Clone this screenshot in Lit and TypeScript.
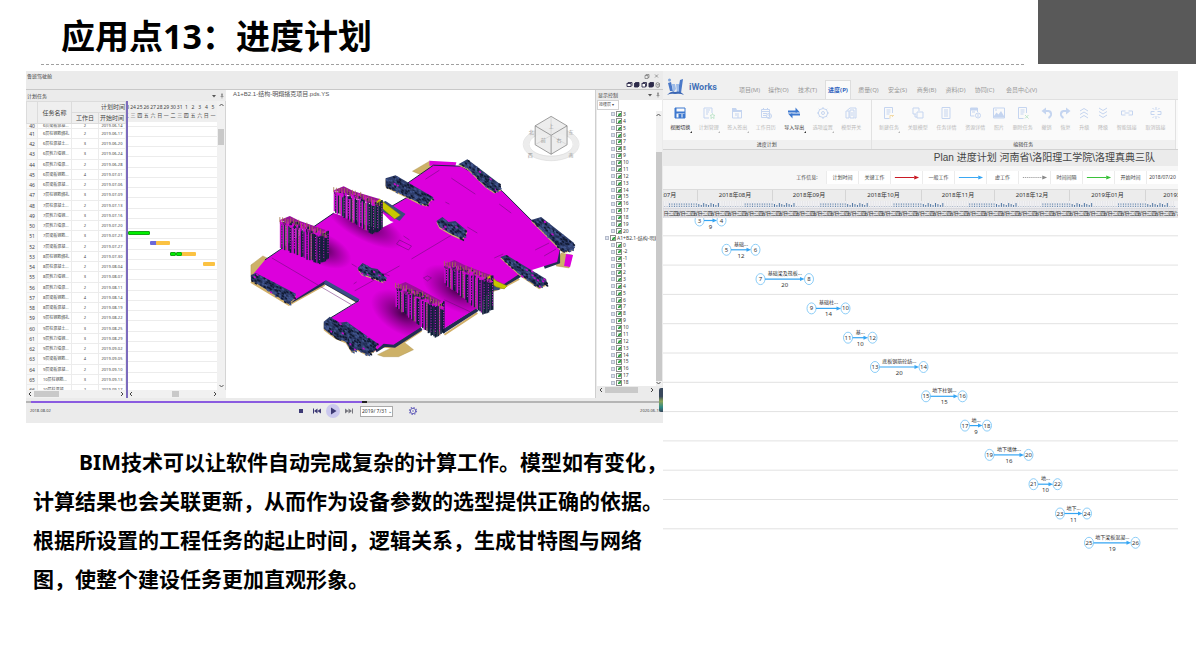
import { LitElement, html, css, svg, nothing } from "lit";
import { customElement } from "lit/decorators.js";
import { classMap } from "lit/directives/class-map.js";

const FONT = css`"Noto Sans", "Noto Sans CJK SC", sans-serif`;

/* ---------- schedule data ---------- */

type Task = [number, string, string, string];
const TASKS: Task[] = [
  [40, "6层梁板混凝...", "2", "2019-06-14"],
  [41, "6层柱钢筋绑扎", "2", "2019-06-17"],
  [42, "6层柱混凝土...", "3", "2019-06-20"],
  [43, "6层剪力墙钢...", "3", "2019-06-24"],
  [44, "6层剪力墙混...", "2", "2019-06-28"],
  [45, "6层梁板钢筋...", "4", "2019-07-01"],
  [46, "6层梁板混凝...", "2", "2019-07-06"],
  [47, "7层柱钢筋绑扎", "3", "2019-07-09"],
  [48, "7层柱混凝土...", "2", "2019-07-13"],
  [49, "7层剪力墙钢...", "3", "2019-07-16"],
  [50, "7层剪力墙混...", "2", "2019-07-20"],
  [51, "7层梁板钢筋...", "3", "2019-07-23"],
  [52, "7层梁板混凝...", "2", "2019-07-27"],
  [53, "8层柱钢筋绑扎", "4", "2019-07-30"],
  [54, "8层柱混凝土...", "2", "2019-08-04"],
  [55, "8层剪力墙钢...", "3", "2019-08-07"],
  [56, "8层剪力墙混...", "2", "2019-08-11"],
  [57, "8层梁板钢筋...", "4", "2019-08-14"],
  [58, "8层梁板混凝...", "2", "2019-08-19"],
  [59, "9层柱钢筋绑扎", "2", "2019-08-22"],
  [60, "9层柱混凝土...", "3", "2019-08-25"],
  [61, "9层剪力墙钢...", "3", "2019-08-29"],
  [62, "9层剪力墙混...", "2", "2019-09-02"],
  [63, "9层梁板钢筋...", "4", "2019-09-05"],
  [64, "9层梁板混凝...", "2", "2019-09-10"],
  [65, "10层柱钢筋...", "3", "2019-09-13"],
  [66, "10层柱混凝", "2", "2019-09-17"],
];
const DAYS: [string, string][] = [
  ["23", "二"], ["24", "三"], ["25", "四"], ["26", "五"], ["27", "六"], ["28", "日"], ["29", "一"],
  ["30", "二"], ["31", "三"], ["1", "四"], ["2", "五"], ["3", "六"], ["4", "日"], ["5", "一"], ["6", "二"],
];
/* bars: task number -> segments of [kind, left %, width %] */
const BARS: Record<number, [string, number, number][]> = {
  51: [["green", 0, 25]],
  52: [["violet", 25, 8], ["amber", 32, 15]],
  53: [["amber", 60, 16], ["green", 47, 7], ["green", 54, 7]],
  54: [["amber", 84, 14]],
};

/* ---------- building model ---------- */

function random(seed: number) {
  let s = seed;
  return () => {
    s = (s * 16807) % 2147483647;
    return s / 2147483647;
  };
}

type P = [number, number];
const pts = (list: P[]) => list.map((p) => p.join(",")).join(" ");

function inside(x: number, y: number, poly: P[]) {
  let hit = false;
  for (let i = 0, j = poly.length - 1; i < poly.length; j = i++) {
    const [xi, yi] = poly[i];
    const [xj, yj] = poly[j];
    if (yi > y !== yj > y && x < ((xj - xi) * (y - yi)) / (yj - yi) + xi) hit = !hit;
  }
  return hit;
}

const CLUSTERS: P[][] = [
  [[386, 178], [396, 175], [434, 197], [427, 205], [420, 203], [386, 186]],
  [[437, 221], [443, 217], [449, 222], [456, 221], [468, 231], [463, 239], [452, 234], [440, 227]],
  [[459, 164], [468, 159], [501, 184], [502, 189], [495, 192], [486, 186], [468, 168]],
  [[532, 220], [542, 217], [575, 243], [575, 249], [564, 252], [556, 244], [545, 233]],
  [[358, 268], [363, 263], [372, 268], [378, 269], [387, 278], [384, 282], [371, 277], [362, 274]],
  [[251, 275], [256, 273], [296, 294], [294, 299], [289, 304], [251, 280]],
  [[324, 322], [330, 317], [340, 323], [347, 322], [377, 343], [376, 350], [368, 355], [358, 350], [352, 352], [346, 342], [336, 338], [329, 333], [324, 329]],
  [[501, 257], [507, 255], [547, 279], [548, 284], [540, 288], [521, 275]],
];

function cluster(poly: P[], seed: number) {
  const rnd = random(seed);
  const xs = poly.map((p) => p[0]);
  const ys = poly.map((p) => p[1]);
  const x0 = Math.min(...xs), x1 = Math.max(...xs), y0 = Math.min(...ys), y1 = Math.max(...ys);
  const dots = [];
  for (let x = x0; x < x1; x += 2.5) {
    for (let y = y0; y < y1; y += 2.5) {
      const px = x + rnd() * 2, py = y + rnd() * 2;
      if (!inside(px, py, poly)) continue;
      const c = rnd();
      const fill = c < 0.45 ? "#111a33" : c < 0.82 ? "#41558c" : c < 0.95 ? "#222e54" : "#c808cc";
      dots.push(svg`<path fill=${fill} d="M${px} ${py}l2.200 1v1.800l-2.200 -1z"/>`);
    }
  }
  return svg`
    <polygon points=${pts(poly)} fill="#d2b06a" transform="translate(0 1.4)"/>
    <polygon points=${pts(poly)} fill="#2e3d6a"/>${dots}`;
}

/* x, top and bottom of the left edge, then top and bottom of the near corner */
const TOWERS = [
  [334, 190, 212, 204, 234],
  [280, 220, 248, 235, 264],
  [445, 264, 284, 280, 315],
  [396, 286, 307, 306, 338],
];

function tower([x, t0, b0, t1, b1]: number[], seed: number) {
  const rnd = random(seed);
  const front = 39, side = 48;
  const strips = [];
  const colors = ["#d306d3", "#16213a", "#d306d3", "#16213a", "#8e5a6a", "#d306d3", "#0d2236", "#0d2236", "#7a1590"];
  let k = 0;
  for (let d = 0; d < side; d += 1.4) {
    const f = Math.min(d, front) / front;
    const back = d > front ? (d - front) * 0.6 : 0;
    const top = t0 + (t1 - t0) * f - back + rnd() * 2;
    const bottom = b0 + (b1 - b0) * f - back + rnd() * 2 - 1;
    const dark = d > 32 && rnd() > 0.3;
    strips.push(svg`<rect x=${x + d} y=${top} width="1.6" height=${bottom - top} fill=${dark ? "#12203a" : colors[k % colors.length]}/>`);
    if (k % 3 === 1)
      strips.push(svg`<path d="M${x + d + 0.7} ${top + 3}V${bottom - 4}" stroke="#e21be2" stroke-width="1" stroke-dasharray="1 1.6"/>`);
    k++;
  }
  const roof = [];
  for (let i = 0; i < 90; i++) {
    const f = rnd();
    const px = x + f * 46;
    const py = t0 + (t1 - t0) * f - 6 * rnd() * Math.sin(f * 3.1) + 2 - f;
    const c = rnd();
    roof.push(svg`<rect x=${px} y=${py} width=${1 + rnd() * 1.8} height=${1 + rnd() * 2.2} fill=${c < 0.5 ? "#d306d3" : c < 0.8 ? "#17243f" : "#7c1a80"}/>`);
  }
  for (let i = 0; i < 18; i++) {
    const f = i / 17;
    const px = x + f * 46;
    const py = t0 + (t1 - t0) * f - 4 * Math.abs(Math.sin(f * 3.1)) * rnd();
    roof.push(svg`<path d="M${px} ${py - 3}v5" stroke="#a5774a" stroke-width=".8"/>`);
  }
  return svg`
    <polygon points=${pts([[x, t0], [x + 10, t0 - 4], [x + 20, t0 + 1], [x + 46, t1 - 5], [x + 40, t1]])} fill="#9a1298"/>
    ${strips}${roof}`;
}

const PLATE =
  "M434 165L462 166L503 191L532 220L574 246L561 248L558 262L520 274L505 284L492 289L478 308L441 331L422 327L394 345L384 344L375 352L331 318L360 301L325 281L295 300L289 302L251 277L265 260L280 250L334 213L378 229L392 222L382 212L408 197L408 183Z";

const model = svg`
  <defs>
    <radialGradient id="shade"><stop offset="0" stop-color="#2a0030" stop-opacity=".85"/><stop offset=".45" stop-color="#3c0040" stop-opacity=".45"/><stop offset="1" stop-color="#500050" stop-opacity="0"/></radialGradient>
    <clipPath id="plate"><path d=${PLATE}/></clipPath>
  </defs>
  <g fill="#cdb168" stroke="#a98f4a" stroke-width=".4">
    <path d="M413 171L430 161L440 164L420 174Z"/>
    <path d="M251 265L263 256L271 260L264 270L251 277Z"/>
    <path d="M562 253L567 254L573 255L570 268L557 266Z"/>
    <path d="M378 355L404 342L414 350L399 357L384 357Z"/>
  </g>
  <path fill="#dc00dc" d="M430 160.500L457 162L456 166L430 165.500ZM567 254L574 255L571 267L565 266Z"/>
  <g fill="none" stroke="#d2b06a" stroke-width="2">
    <path d="M251 282L289 305L325 285M445 335L478 313M384 347L396 348L422 331M491 292L505 287L520 279M325 283L357 302"/>
  </g>
  <g fill="none" stroke="#222e52" stroke-width="4">
    <path d="M289 302.500L325 282L359 301.500M443 332L478 309.500M376 351L385 345L395 346L422 328.500M490 290L505 284.500L521 275M559 248V262L545 267"/>
  </g>
  <path fill="#dc00dc" d=${PLATE}/>
  <path fill="none" stroke="#3a4d86" stroke-width="3.500" d="M325 281.500L359 301"/>
  <g fill="none" stroke="#1a2344" stroke-width="1">
    <path d="M434 165L462 166L503 191L532 220L574 246M408 183L434 165M331 318L359 301M265 260L334 213M382 212L408 197"/>
  </g>
  <g clip-path="url(#plate)">
    <ellipse cx="322" cy="249" rx="32" ry="16" fill="url(#shade)" transform="rotate(25 322 249)"/>
    <ellipse cx="365" cy="224" rx="44" ry="16" fill="url(#shade)" transform="rotate(28 365 224)"/>
    <ellipse cx="404" cy="314" rx="36" ry="20" fill="url(#shade)" transform="rotate(30 404 314)"/>
    <ellipse cx="457" cy="290" rx="38" ry="20" fill="url(#shade)" transform="rotate(30 457 290)"/>
  </g>
  <g fill="none" stroke="#60106e" stroke-width=".5">
    <path d="M355 291L400 266M412 259L464 228M272 258L352 305M400 240L412 246L409 250L397 244ZM404 236l6 4M445 300l26 12M452 178L476 194M500 204l12 9M440 170l-14 9M536 250l14 -7M545 256l12 -7M495 258l9 -4M424 278l4 -2l4 2l-4 3zM446 202l4 2M468 227l10 6M382 273l8 3M352 264l5 3M354 284l3 -2"/>
  </g>
  <path fill="#3a4d7c" d="M381 203L386 201L406 214L400 221L384 212Z"/>
  <path fill="#c8c800" stroke="#77770a" stroke-width=".5" d="M373 200L380 199L401 215L395 219Z"/>
  <path fill="#fff" d="M381 218L394 222L380 229Z"/>
  ${CLUSTERS.map((c, i) => cluster(c, 97 + i * 31))}
  <path fill="#3a4d7c" d="M492 281L502 284L500 290L490 291Z"/>
  <path fill="#c8c800" stroke="#77770a" stroke-width=".5" d="M480 273L491 275L497 281L508 286L505 289L497 287L485 279Z"/>
  ${TOWERS.map((t, i) => tower(t, 411 + i * 57))}
  <g fill="none" stroke="#d9d9d9">
    <ellipse cx="552" cy="144" rx="25" ry="14" stroke="#ececec" stroke-width="5"/>
    <ellipse cx="552" cy="144" rx="28" ry="16.500" stroke-width=".6"/>
    <ellipse cx="552" cy="144" rx="22" ry="12" stroke-width=".6"/>
  </g>
  <path d="M552 116L568 125.500V144.500L552 154L536 144.500V125.500Z" fill="#ebebeb" fill-opacity=".9" stroke="#777" stroke-width=".7"/>
  <path d="M536 125.500L552 135L568 125.500M552 135V154" fill="none" stroke="#777" stroke-width=".7"/>
  <g fill="none" stroke="#bbb" stroke-width=".4"><path d="M552 116V135M536 144.500L552 135L568 144.500"/></g>
  <g class="cube">
    <text x="552" y="128">上</text><text x="544" y="142">前</text><text x="560" y="142">右</text>
    <text x="532" y="134">北</text><text x="572" y="134">东</text><text x="531" y="157">西</text><text x="572" y="157">南</text>
  </g>`;

@customElement("plan-gantt")
class PlanGantt extends LitElement {
  static styles = css`
    :host { display: grid; grid-template-columns: 100px 2px 1fr 8px; grid-template-rows: minmax(0, 1fr); overflow: hidden; background: #fff; color: #444; font: 5px/6px ${FONT}; border-right: 1px solid #d4d4d4; }
    .left, .right { overflow: hidden; }
    table { border-collapse: collapse; width: 100%; table-layout: fixed; }
    thead th { background: #efefef; font-weight: 400; font-size: 6px; border: 1px solid #dcdcdc; padding: 0; height: 10px; }
    th.index { width: 10px; }
    th.name { width: 33px; }
    th.days { width: 19px; }
    thead tr:first-child th.period { text-align: right; }
    tbody { font-size: 4px; }
    td { height: 9px; padding: 0; text-align: center; white-space: nowrap; overflow: hidden; border: 1px solid #ececec; border-top: 0; }
    tbody tr:nth-child(4n) td { height: 10px; }
    tbody tr:first-child td { height: 4px; line-height: 0; }
    td.no { font-size: 5px; background: #f8f8f8; }
    td.text { text-align: left; padding-left: 5px; }
    .rule { background: #7c6bbd; }
    .calendar { display: grid; grid-template-columns: repeat(15, 1fr); width: 100px; margin-left: -5px; height: 21px; padding-top: 2px; box-sizing: border-box; background: #efefef; font-size: 5px; line-height: 8px; text-align: center; }
    .calendar span { white-space: nowrap; }
    .lane { position: relative; height: 9px; border-bottom: 1px solid #ececec; }
    .lane:nth-child(4n + 1) { height: 10px; }
    .lane.first { height: 4px; }
    .bar { position: absolute; top: 2px; height: 4px; border-radius: 1px; box-sizing: border-box; }
    .green { background: #00f000; border: 1px solid #15a315; }
    .violet { background: #6c69d8; }
    .amber { background: #fbc242; }
    .scroll { background: #f1f1f1; display: grid; grid-template-rows: 8px 20px 16px 1fr 8px; justify-items: center; }
    .thumb { grid-row: 3; width: 6px; background: #c9c9c9; }
    .scroll svg { width: 5px; height: 4px; margin-top: 2px; }
    .scroll .down { grid-row: 5; }
  `;
  render() {
    return html`
      <div class="left">
        <table>
          <thead>
            <tr><th class="index" rowspan="2"></th><th class="name" rowspan="2">任务名称</th><th class="period" colspan="2">计划时间</th></tr>
            <tr><th class="days">工作日</th><th>开始时间</th></tr>
          </thead>
          <tbody>
            ${TASKS.map(([n, name, d, start]) => html`<tr><td class="no">${n}</td><td class="text">${name}</td><td>${d}</td><td>${start}</td></tr>`)}
          </tbody>
        </table>
      </div>
      <div class="rule"></div>
      <div class="right">
        <div class="calendar">${DAYS.map(([d, w]) => html`<span>${d}<br />${w}</span>`)}</div>
        <div>
          ${TASKS.map(([n], i) => html`<div class=${classMap({ lane: true, first: i === 0 })}>
            ${(BARS[n] ?? []).map(([kind, x, w]) => html`<div class="bar ${kind}" style="left:${x}%;width:${w}%"></div>`)}
          </div>`)}
        </div>
      </div>
      <div class="scroll">
        <svg viewBox="0 0 5 4"><path d="M.5 3L2.500 1L4.500 3" fill="none" stroke="#555"/></svg>
        <div class="thumb"></div>
        <svg class="down" viewBox="0 0 5 4"><path d="M.5 1L2.500 3L4.500 1" fill="none" stroke="#555"/></svg>
      </div>`;
  }
}

const range = (a: number, b: number) => Array.from({ length: b - a + 1 }, (_, i) => String(a + i));
const TREE = [...range(3, 20), "A1+B2.1-结构-明翔播", "0", "-2", "-1", ...range(1, 18)];

@customElement("level-tree")
class LevelTree extends LitElement {
  static styles = css`
    :host { display: grid; grid-template-columns: minmax(0, 1fr) 6px; grid-template-rows: minmax(0, 1fr); background: #fff; color: #444; font: 5px/5px ${FONT}; overflow: hidden; min-height: 0; }
    ul { margin: 0; padding: 0 0 0 14px; list-style: none; display: grid; grid-auto-rows: minmax(0, 1fr); min-width: 0; overflow: hidden; }
    li { display: flex; align-items: center; min-height: 0; white-space: nowrap; }
    li.root { margin-left: -6px; }
    label { display: flex; align-items: center; gap: 1px; }
    .plus { width: 4px; height: 4px; border: 1px solid #b6bccb; background: #dde2ee; margin-right: 1px; box-sizing: border-box; flex: none; }
    input { appearance: none; flex: none; margin: 0; width: 6px; height: 6px; box-sizing: border-box; border: 1px solid #8c8c8c; background: #fff linear-gradient(135deg, #c9e8cd 20%, #1f9a35 50%, #a8d8ae) center / 3px 3px no-repeat; }
    .scroll { background: #f1f1f1; display: grid; grid-template-rows: 41px 1fr 5px; }
    .thumb { grid-row: 2; background: #c9c9c9; }
    .scroll svg { width: 5px; height: 4px; margin-top: 2px; }
    .scroll .down { margin-top: 0; }
  `;
  render() {
    return html`<ul>
        ${TREE.map((t) => html`<li class=${t.startsWith("A1") ? "root" : ""}><span class="plus"></span><label><input type="checkbox" checked />${t}</label></li>`)}
      </ul>
      <div class="scroll">
        <svg viewBox="0 0 5 4"><path d="M.5 3L2.500 1L4.500 3" fill="none" stroke="#555"/></svg>
        <div class="thumb"></div>
        <svg class="down" viewBox="0 0 5 4"><path d="M.5 1L2.500 3L4.500 1" fill="none" stroke="#555"/></svg>
      </div>`;
  }
}

@customElement("model-viewer")
class ModelViewer extends LitElement {
  static styles = css`
    :host { display: block; background: #ebebeb; color: #444; font: 5px/6px ${FONT}; overflow: hidden; }
    header { display: grid; grid-template-columns: 1fr auto; height: 19px; box-sizing: border-box; padding: 2px 2px 0 1px; border-bottom: 1px solid #c8c8c8; }
    header svg { width: 36px; height: 17px; }
    .body { display: grid; grid-template-columns: 200px minmax(0, 1fr) 67px; grid-template-rows: minmax(0, 1fr); height: 308px; }
    .pane { display: grid; grid-template-rows: 11px minmax(0, 1fr) 8px; min-width: 0; }
    .caption { display: flex; align-items: center; justify-content: space-between; padding: 0 1px; }
    .caption svg { width: 16px; height: 6px; }
    .hscroll { display: grid; grid-template-columns: 100px 1fr; background: #f1f1f1; }
    .hscroll svg { width: 100%; height: 8px; }
    .scene { background: #fff; position: relative; overflow: hidden; border-right: 1px solid #cfcfcf; }
    .scene svg { display: block; width: 100%; height: 100%; }
    .file { position: absolute; left: 7px; top: 1px; color: #555; font: 6px/7px "Liberation Sans", "Noto Sans CJK SC", sans-serif; white-space: nowrap; }
    .cube { font: 5px "Noto Sans CJK SC", sans-serif; fill: #999; text-anchor: middle; }
    .levels { display: grid; grid-template-rows: 10px 11px minmax(0, 1fr) 8px 4px; padding: 0 1px; min-width: 0; }
    .filter { background: #fff; }
    select { appearance: none; display: block; width: 22px; height: 10px; padding: 0 0 0 1px; border: 1px solid #d2d2d2; border-radius: 0; background: #fff; color: #444; font: 4px/6px ${FONT}; }
    .levels > svg { width: 100%; height: 8px; }
    footer { position: relative; border-top: 0; height: 25px; }
    footer > svg { display: block; width: 100%; height: 6px; }
    .controls { display: grid; grid-template-columns: 1fr auto 1fr; align-items: center; height: 14px; padding: 0 0 0 4px; font-size: 4px; }
    .player { display: flex; align-items: center; gap: 4px; padding-left: 11px; }
    button { border: 0; padding: 0; background: none; width: 12px; height: 14px; display: grid; place-items: center; }
    button svg { width: 12px; height: 14px; }
    input { width: 33px; height: 11px; box-sizing: border-box; border: 1px solid #aaa; padding: 0 0 0 1px; margin-left: 1px; background: #fff; color: #333; font: 5px/8px ${FONT}; }
    .end { text-align: right; padding-right: 2px; }
    .strip { position: absolute; right: 0; top: -10px; width: 4px; height: 24px; border-radius: 2px 0 0 2px; background: linear-gradient(#39485c 35%, #8ba458 55%, #2f8a87 80%, #39485c); }
  `;
  render() {
    return html`
      <header>
        <span>鲁班驾驶舱</span>
        <svg viewBox="0 0 36 17">
          <path d="M20 2.500h3v3h-3zM21 2.500v-1h3v3h-1M30 1.500l3 3M33 1.500l-3 3" fill="none" stroke="#777" stroke-width=".7"/>
          <g fill="#fff" stroke="#2d2a4a" stroke-width=".9"><path d="M2 10.500h4v3h-4zM2 10.500l1 -1h4v3l-1 1"/><path fill="#2d2a4a" d="M9.500 10.500h3.500v3.500h-3.500zM9.500 10.500l1 -1h3.500v3.500l-1 1"/><path d="M17 10.500h3.500v3.500h-3.500zM17 10.500l1 -1h3.500v4"/><path fill="#2d2a4a" d="M24 10.500h3.500v3.500h-3.500zM24 10.500l1 -1h3.500v3.500l-1 1"/><path stroke="#888" d="M31 10.500l1.500 -1l2 1v3l-2 1l-1.500 -1zl2 1v3M33 11.500l1.500 -1"/></g>
        </svg>
      </header>
      <div class="body">
        <section class="pane">
          <div class="caption"><span>计划任务</span>${this.pin()}</div>
          <plan-gantt></plan-gantt>
          <div class="hscroll">
            <svg viewBox="0 0 100 8" preserveAspectRatio="none"><rect x="8" y="1" width="25" height="6" fill="#c9c9c9"/><path d="M5 2L3 4L5 6M95 2L97 4L95 6" fill="none" stroke="#444"/></svg>
            <svg viewBox="0 0 100 8" preserveAspectRatio="none"><rect x="46" y="1" width="7" height="6" fill="#c9c9c9"/><path d="M1 0V8" stroke="#7c6bbd" stroke-width="2"/><path d="M6 2L4 4L6 6M88 2L90 4L88 6" fill="none" stroke="#444"/></svg>
          </div>
        </section>
        <section class="scene">
          <svg viewBox="226 90 370 308" preserveAspectRatio="xMidYMid meet">${model}</svg>
          <span class="file">A1+B2.1-结构-明翔播克项目.pds.YS</span>
        </section>
        <section class="levels">
          <div class="caption"><span>显示控制</span>${this.pin()}</div>
          <div class="filter"><select aria-label="显示控制"><option>按楼层 ▾</option></select></div>
          <level-tree></level-tree>
          <svg viewBox="0 0 65 8" preserveAspectRatio="none"><rect x="8" y="1" width="33" height="6" fill="#c9c9c9"/><path d="M5 2L3 4L5 6M54 2L56 4L54 6" fill="none" stroke="#444"/></svg>
        </section>
      </div>
      <footer>
        <svg viewBox="0 0 637 6" preserveAspectRatio="none"><path d="M0 4H637" stroke="#b5b5b5" stroke-width="2"/><path d="M5 4H336" stroke="#8a5be0" stroke-width="2"/><path d="M336 4H341" stroke="#222" stroke-width="2"/></svg>
        <div class="controls">
          <span>2018-08-02</span>
          <div class="player">
            <button aria-label="停止"><svg viewBox="0 0 12 14"><path d="M4 5h4v4H4z" fill="#3d3a75"/></svg></button>
            <button aria-label="上一步"><svg viewBox="0 0 12 14"><path d="M2 4.500h1v5h-1zM3 7l3.500 -2.500v5zM6.500 7l3.500 -2.500v5z" fill="#3d3a75"/></svg></button>
            <button aria-label="播放"><svg viewBox="0 0 12 14" overflow="visible"><circle cx="6" cy="7" r="7" fill="#cbc8ee"/><path d="M4 3.500L9.500 7L4 10.500z" fill="#3d3a75"/></svg></button>
            <button aria-label="下一步"><svg viewBox="0 0 12 14"><path d="M9 4.500h1v5h-1zM9 7l-3.500 -2.500v5zM5.500 7l-3.500 -2.500v5z" fill="#77777f"/></svg></button>
            <input aria-label="日期" value="2019/ 7/31 ⌄" />
            <button aria-label="设置"><svg viewBox="0 0 12 14" overflow="visible"><circle cx="16" cy="7" r="2.700" fill="none" stroke="#6d68bd" stroke-width="1"/><circle cx="16" cy="7" r="3.500" fill="none" stroke="#6d68bd" stroke-width="1.200" stroke-dasharray="1.400 1.350"/><circle cx="16" cy="7" r=".8" fill="#6d68bd"/></svg></button>
          </div>
          <span class="end">2020-06-15</span>
        </div>
        <div class="strip"></div>
      </footer>`;
  }
  private pin() {
    return html`<svg viewBox="0 0 16 6"><path d="M3 2h4l-2 2.500z" fill="#555"/><path d="M12 1h2M12.500 1v2.500M13.500 1v2.500M11.500 3.500h3M13 3.500v2" fill="none" stroke="#777" stroke-width=".6"/></svg>`;
  }
}

/* ---------- network plan ---------- */

const MENUS = ["项目(M)", "操作(O)", "技术(T)", "进度(P)", "质量(Q)", "安全(S)", "商务(B)", "资料(D)", "协同(C)", "会员中心(V)"];

const doc = svg`<path d="M2 .5h8v11h-8zM4 3h4M4 5h4M4 7h4M4 9h4"/>`;
const ICONS: Record<string, unknown> = {
  view: svg`<path d="M1 1h10v10h-10z"/><path class="solid" d="M1 1h1.500v10h-1.500zM2 4.500h9v2h-9zM4.500 7h3v4h-3zM8.500 7h2.500v4h-2.500z"/>`,
  manage: svg`<path d="M9 6V1h-8v10h5M3 3h4M3 5h3M3 7h2"/><path class="green" d="M9.500 6.500l.8 1.700l1.700 .2l-1.300 1.200l.4 1.900l-1.600 -1l-1.600 1l.4 -1.900l-1.300 -1.200l1.700 -.2z"/>`,
  check: svg`<path class="solid" d="M1 1h4l1 2h5v2h-10z"/><path d="M1.500 4v7h9v-7M5 6v3M7 6v5"/>`,
  calendar: svg`<path d="M1.500 2.500h8v8h-8zM3.500 1v2M7.500 1v2M1.500 4.500h8M3 6.500h4M3 8.500h3"/><circle cx="9" cy="9" r="2.500"/><path d="M9 7.500v1.500h1.500"/>`,
  swap: svg`<path class="bold" d="M0 4.500h9M12 7.500h-9"/><path class="solid" d="M7.500 .5l4.500 5h-4.500zM4.500 11.500l-4.500 -5h4.500z"/>`,
  gear: svg`<path d="M6 1.500l3.500 1.200l1.200 3.300l-1.200 3.300l-3.500 1.200l-3.500 -1.200l-1.200 -3.300l1.200 -3.300z"/><path d="M6 0v2M6 10v2M0 6h2M10 6h2M1.800 1.800l1 1M9.200 9.200l1 1M10.200 1.800l-1 1M2.800 9.200l-1 1"/><circle cx="6" cy="6" r="1.500"/>`,
  building: svg`<path d="M1 4h3v7h-3zM5 3h4v8h-4zM2 3.500l3 -2.500h6v2M11 3v8h-1.500M7 5v4"/>`,
  newdoc: svg`<path d="M9.500 6V.5h-8v11h5M3.500 3h4M3.500 5h4M3.500 7h3"/><path class="amber" d="M7 11.500v-3h4M9 10l2 -2"/>`,
  link: svg`<path d="M4 7h-3v-6h6v3M5 5h6v6h-6zM3 7v3h2"/>`,
  doc,
  resource: svg`<path class="solid" d="M1 1h8v2.500h-8z"/><path d="M8.500 5V1h-7v8h4M3 5h3"/><circle cx="9" cy="8.500" r="2.500"/><path d="M9 7v3"/>`,
  photo: svg`<path d="M.5 1h11v10h-11z"/><path class="solid" d="M1 9l2.500 -3.500l2 2l2.500 -3.500l3 5v1.500h-10zM3 2l1 1l-1 1l-1 -1z"/>`,
  remove: svg`<path d="M9.500 6V.5h-8v11h5M3.500 3h4M3.500 5h4M3.500 7h3"/><path class="green" d="M8 8l3.500 3.500M11.500 8l-3.500 3.500"/>`,
  undo: svg`<path class="bold" d="M4 4h3.500q3 .5 2.500 4q-.5 2 -2.500 3"/><path class="solid" d="M5 .5v7l-4.500 -3.500z"/>`,
  redo: svg`<path class="bold" d="M8 4h-3.500q-3 .5 -2.500 4q.5 2 2.500 3"/><path class="solid" d="M7 .5v7l4.500 -3.500z"/>`,
  up: svg`<path d="M2 4l4 -2.500l4 2.500M2 7.500l4 -2.500l4 2.500M2 11l4 -2.500l4 2.500"/>`,
  down: svg`<path d="M2 1l4 2.500l4 -2.500M2 4.500l4 2.500l4 -2.500M2 8l4 2.500l4 -2.500"/>`,
  chain: svg`<path d="M4.500 4h-4v4h4M7.500 4h4v4h-4M3.500 6h5"/>`,
  unlink: svg`<path d="M4.500 4.500h-3.500v3h3.500M7.500 4.500h3.500v3h-3.500M6 0v3M6 9v3M2.500 1l1.500 1.500M9.500 1l-1.500 1.500M2.500 11l1.500 -1.500M9.500 11l-1.500 -1.500"/>`,
};

type Tool = [string, string, boolean?, boolean?];
const PLAN_TOOLS: Tool[] = [
  ["view", "视图切换", true, true], ["manage", "计划管理", false, true], ["check", "签入签出", false, true],
  ["calendar", "工作日历"], ["swap", "导入导出", true, true], ["gear", "选项设置", false, true], ["building", "模型开关"],
];
const TASK_TOOLS: Tool[] = [
  ["newdoc", "新建任务", false, true], ["link", "关联模型"], ["doc", "任务详情"], ["resource", "资源详情"], ["photo", "照片"],
  ["remove", "删除任务"], ["undo", "撤销"], ["redo", "恢复"], ["up", "升级"], ["down", "降级"], ["chain", "智能链接"], ["unlink", "取消链接"],
];
const MONTHS = ["2018年07月", "2018年08月", "2018年09月", "2018年10月", "2018年11月", "2018年12月", "2019年01月", "2019年02月"];
const MONTH_DAYS = [31, 31, 30, 31, 30, 31, 31, 28];
const LINKS: [number, number, number, string, string][] = [
  [3, 699.5, 721.5, "", "9"], [5, 726.5, 755.5, "基础...", "12"], [7, 760.5, 809, "基础梁及筏板...", "20"],
  [9, 811.5, 845.5, "基础柱...", "14"], [11, 848, 872.5, "基...", "10"], [13, 875, 923.5, "底板钢筋砼结...", "20"],
  [15, 926, 962.5, "地下柱钢...", "15"], [17, 965, 987, "地...", "9"], [19, 989.5, 1028.5, "地下墙体...", "16"],
  [21, 1033.5, 1057.5, "地...", "10"], [23, 1060, 1087, "地下...", "11"], [25, 1089, 1135.5, "地下梁板混凝...", "19"],
];

@customElement("network-plan")
class NetworkPlan extends LitElement {
  static styles = css`
    :host { display: block; background: #fff; color: #444; font: 6px/8px ${FONT}; overflow: hidden; }
    .top { display: flex; align-items: flex-end; height: 29px; box-sizing: border-box; background: #f0f0f0; border-bottom: 1px solid #e0e0e0; }
    .brand { display: flex; align-items: center; gap: 5px; width: 68px; padding: 0 0 3px 4px; color: #4472b8; font: bold 9px/14px Roboto, ${FONT}; }
    .brand svg { width: 17px; height: 18px; }
    nav { display: flex; flex: 1; height: 19px; }
    nav a { display: grid; place-items: center; flex: 0 0 29px; color: #999; text-decoration: none; white-space: nowrap; border: 1px solid transparent; border-bottom: 0; box-sizing: border-box; }
    nav a:last-child { flex-basis: 45px; }
    nav a.active { flex-basis: 26px; margin: 0 3px; background: #fafafa; border-color: #ddd; color: #2f62bd; font-weight: 700; }
    .ribbon { display: grid; grid-template-columns: 209fr 305fr 2fr; background: #fafafa; border-bottom: 1px solid #d2d2d2; }
    .group { display: grid; grid-template-rows: 40px 9px; border-right: 1px solid #e2e2e2; }
    .tools { display: flex; padding: 7px 5px 0 3px; }
    .caption { background: #f0f0f0; text-align: center; font-size: 5px; }
    .tools button { position: relative; flex: 19 1 19px; display: flex; flex-direction: column; align-items: center; gap: 5px; padding: 0; border: 0; background: none; color: #b9b9b9; font: 5px/7px ${FONT}; white-space: nowrap; }
    .tools button.wide { flex: 29 1 29px; }
    .tools button.on { color: #333; }
    .tools svg { width: 12px; height: 12px; fill: none; stroke: #c5d5f0; stroke-width: 1; color: #c5d5f0; }
    .tools .on svg { stroke: #3d78cf; color: #3d78cf; }
    .solid { fill: currentColor; stroke: none; }
    .bold { stroke-width: 2; }
    .green { stroke: #bfe5cb; }
    .amber { stroke: #f3dba8; }
    .corner { position: absolute; right: 3px; top: 24px; width: 0; height: 0; border-left: 2px solid transparent; border-bottom: 2px solid currentColor; }
    h2 { margin: 0; height: 16px; padding-right: 23px; background: #ebebeb; color: #444; font: 400 10px/15px "Liberation Sans", "Noto Sans CJK SC", sans-serif; text-align: right; white-space: nowrap; }
    .legend { display: flex; justify-content: flex-end; align-items: center; height: 23px; background: #f7f7f7; font-size: 5px; }
    .legend > * { flex: 0 0 32px; height: 13px; box-sizing: border-box; border-left: 1px solid #ececec; background: #fff; text-align: center; line-height: 13px; white-space: nowrap; }
    .legend > .title { background: none; border: 0; margin-right: 3px; }
    .legend svg { fill: none; }
    .months { display: grid; grid-template-columns: 75px 75px 73px 76px 73px 75px 76px 68px; margin-left: -40px; background: #ececec; border-top: 1px solid #dcdcdc; text-align: center; line-height: 11px; color: #333; }
    .months span { border-right: 1px solid #d5d5d5; }
    .scale { display: block; width: 100%; height: 17px; background: #e6e6e9; }
    .week { font: 5px "Noto Sans CJK SC", sans-serif; fill: #444; }
    .network { display: block; width: 100%; height: auto; }
    .network text { font: 5px ${FONT}; fill: #333; text-anchor: middle; }
    .network .num { font-size: 6px; }
  `;
  private group(tools: Tool[], caption: string) {
    return html`<div class="group">
      <div class="tools">
        ${tools.map(([icon, label, on, more]) => html`<button class=${classMap({ on: !!on, wide: label.length > 2 })}>
          <svg viewBox="0 0 12 12">${ICONS[icon]}</svg>${label}${more ? html`<i class="corner"></i>` : nothing}
        </button>`)}
      </div>
      <div class="caption">${caption}</div>
    </div>`;
  }
  private arrow(color: string, dash = "0") {
    return html`<svg viewBox="0 0 32 13"><path d="M4 6.500H24" stroke=${color} stroke-width="1" stroke-dasharray=${dash}/><path d="M24 4.500L29 6.500L24 8.500z" fill=${color}/></svg>`;
  }
  private scale() {
    const week = "四五六日一二三";
    const days = MONTH_DAYS.flatMap((n) => Array.from({ length: n }, (_, i) => i + 1));
    const cells = days.map((day, i) => ({ day, x: 622 + i * 2.44, name: week[i % 7] })).filter((c) => c.x > 663 && c.x < 1174);
    return html`<svg class="scale" viewBox="663 201 515 17" preserveAspectRatio="none">
      <rect x="663" y="201" width="515" height="7" fill="#f1f1f3"/>
      ${cells.map(({ day, x }) => {
        const top = day < 10 ? 203 + (day % 3) : day < 20 ? 206 : 203.5;
        const color = day >= 10 && day < 20 ? "#a9b6c8" : "#4f76a3";
        return svg`<path d="M${x} 201v17" stroke="#d4d4dc" stroke-width=".4"/>
          <path d="M${x + 1.2} ${top}V207" stroke=${color} stroke-dasharray=${day >= 20 ? "1.2 1" : "0"} stroke-width="1"/>`;
      })}
      <path d="M663 208.500h515" stroke="#d0d0d6" stroke-width=".6"/>
      <text class="week" y="215" x=${cells.map((c) => c.x.toFixed(1)).join(" ")}>${cells.map((c) => c.name).join("")}</text>
    </svg>`;
  }
  private network() {
    return html`<svg class="network" viewBox="663 218 515 342">
      ${LINKS.map(([n, a, b, label, days], i) => {
        const y = 220.5 + i * 29.3;
        return svg`
          ${i ? svg`<path d="M663 ${y - 14}h515" stroke="#e2e2e2"/>` : nothing}
          <g fill="#fff" stroke="#6fc0f5" stroke-width=".8"><ellipse cx=${a} cy=${y} rx="4.500" ry="5.500"/><ellipse cx=${b} cy=${y} rx="4.500" ry="5.500"/></g>
          <path d="M${a + 4.5} ${y}H${b - 8}" stroke="#35a5f3" stroke-width="1.200"/>
          <path d="M${b - 9} ${y - 2}L${b - 4.5} ${y}L${b - 9} ${y + 2}z" fill="#35a5f3"/>
          <text class="num" x=${a} y=${y + 2}>${n}</text><text class="num" x=${b} y=${y + 2}>${n + 1}</text>
          <text x=${(a + b) / 2} y=${y - 4}>${label}</text><text class="num" x=${(a + b) / 2} y=${y + 8}>${days}</text>`;
      })}
    </svg>`;
  }
  render() {
    return html`
      <div class="top">
        <div class="brand">
          <svg viewBox="0 0 17 18"><path d="M1 5l3 -1l2 9h-3zM11 13l2 -11l3 -1l-2 14h-3z" fill="#4a78c8"/><path d="M5 6l3 0l1 5l-3 4zM9 6l3 0v8l-2 1z" fill="#9dbbe8"/><path d="M0 17q4 -5 8 -3q5 -2 9 3q-4 -2 -9 -1q-4 -1 -8 1z" fill="#3c67b4"/><circle cx="2.500" cy="2" r="1.500" fill="#7fa4dc"/></svg>
          <span>iWorks</span>
        </div>
        <nav>${MENUS.map((m, i) => html`<a href="#" class=${i === 3 ? "active" : ""}>${m}</a>`)}</nav>
      </div>
      <div class="ribbon">${this.group(PLAN_TOOLS, "进度计划")}${this.group(TASK_TOOLS, "编辑任务")}<span></span></div>
      <h2>Plan 进度计划 河南省\\洛阳理工学院\\洛理真典三队</h2>
      <div class="legend">
        <span class="title">工作信息:</span><span>计划时间</span><span>关键工作</span>${this.arrow("#c8141e")}<span>一般工作</span>${this.arrow("#35a5f3")}
        <span>虚工作</span>${this.arrow("#888", "1 1")}<span>时间间隔</span>${this.arrow("#35c035")}<span>开始时间</span><span>2018/07/20</span>
      </div>
      <div class="months">${MONTHS.map((m) => html`<span>${m}</span>`)}</div>
      ${this.scale()}
      ${this.network()}`;
  }
}

@customElement("app-root")
class AppRoot extends LitElement {
  static styles = css`
    :host { display: block; min-height: 100vh; background: #fff; color: #000; overflow: hidden; font-family: ${FONT}; }
    header { display: grid; grid-template-columns: minmax(0, 1fr) 158px; gap: 14px; padding-left: 41px; height: 65px; }
    h1 { margin: 0; padding: 0 0 0 20px; border-bottom: 1px dashed #a0a0a0; font: 700 34px/72px ${FONT}; white-space: nowrap; height: 64px; }
    .block { background: #595959; height: 64px; }
    main { display: grid; grid-template-columns: 637fr 515fr; align-items: start; padding: 6px 18px 0 26px; }
    main > * { min-width: 0; }
    p { margin: 0; padding: 20px 0 0 7px; font-size: 21px; line-height: 39px; font-weight: 700; text-indent: 46px; white-space: nowrap; }
    network-plan { position: relative; }
  `;
  render() {
    return html`
      <header><h1>应用点13：进度计划</h1><div class="block"></div></header>
      <main>
        <div>
          <model-viewer></model-viewer>
          <p>BIM技术可以让软件自动完成复杂的计算工作。模型如有变化，<br />计算结果也会关联更新，从而作为设备参数的选型提供正确的依据。<br />根据所设置的工程任务的起止时间，逻辑关系，生成甘特图与网络<br />图，使整个建设任务更加直观形象。</p>
        </div>
        <network-plan></network-plan>
      </main>`;
  }
}
